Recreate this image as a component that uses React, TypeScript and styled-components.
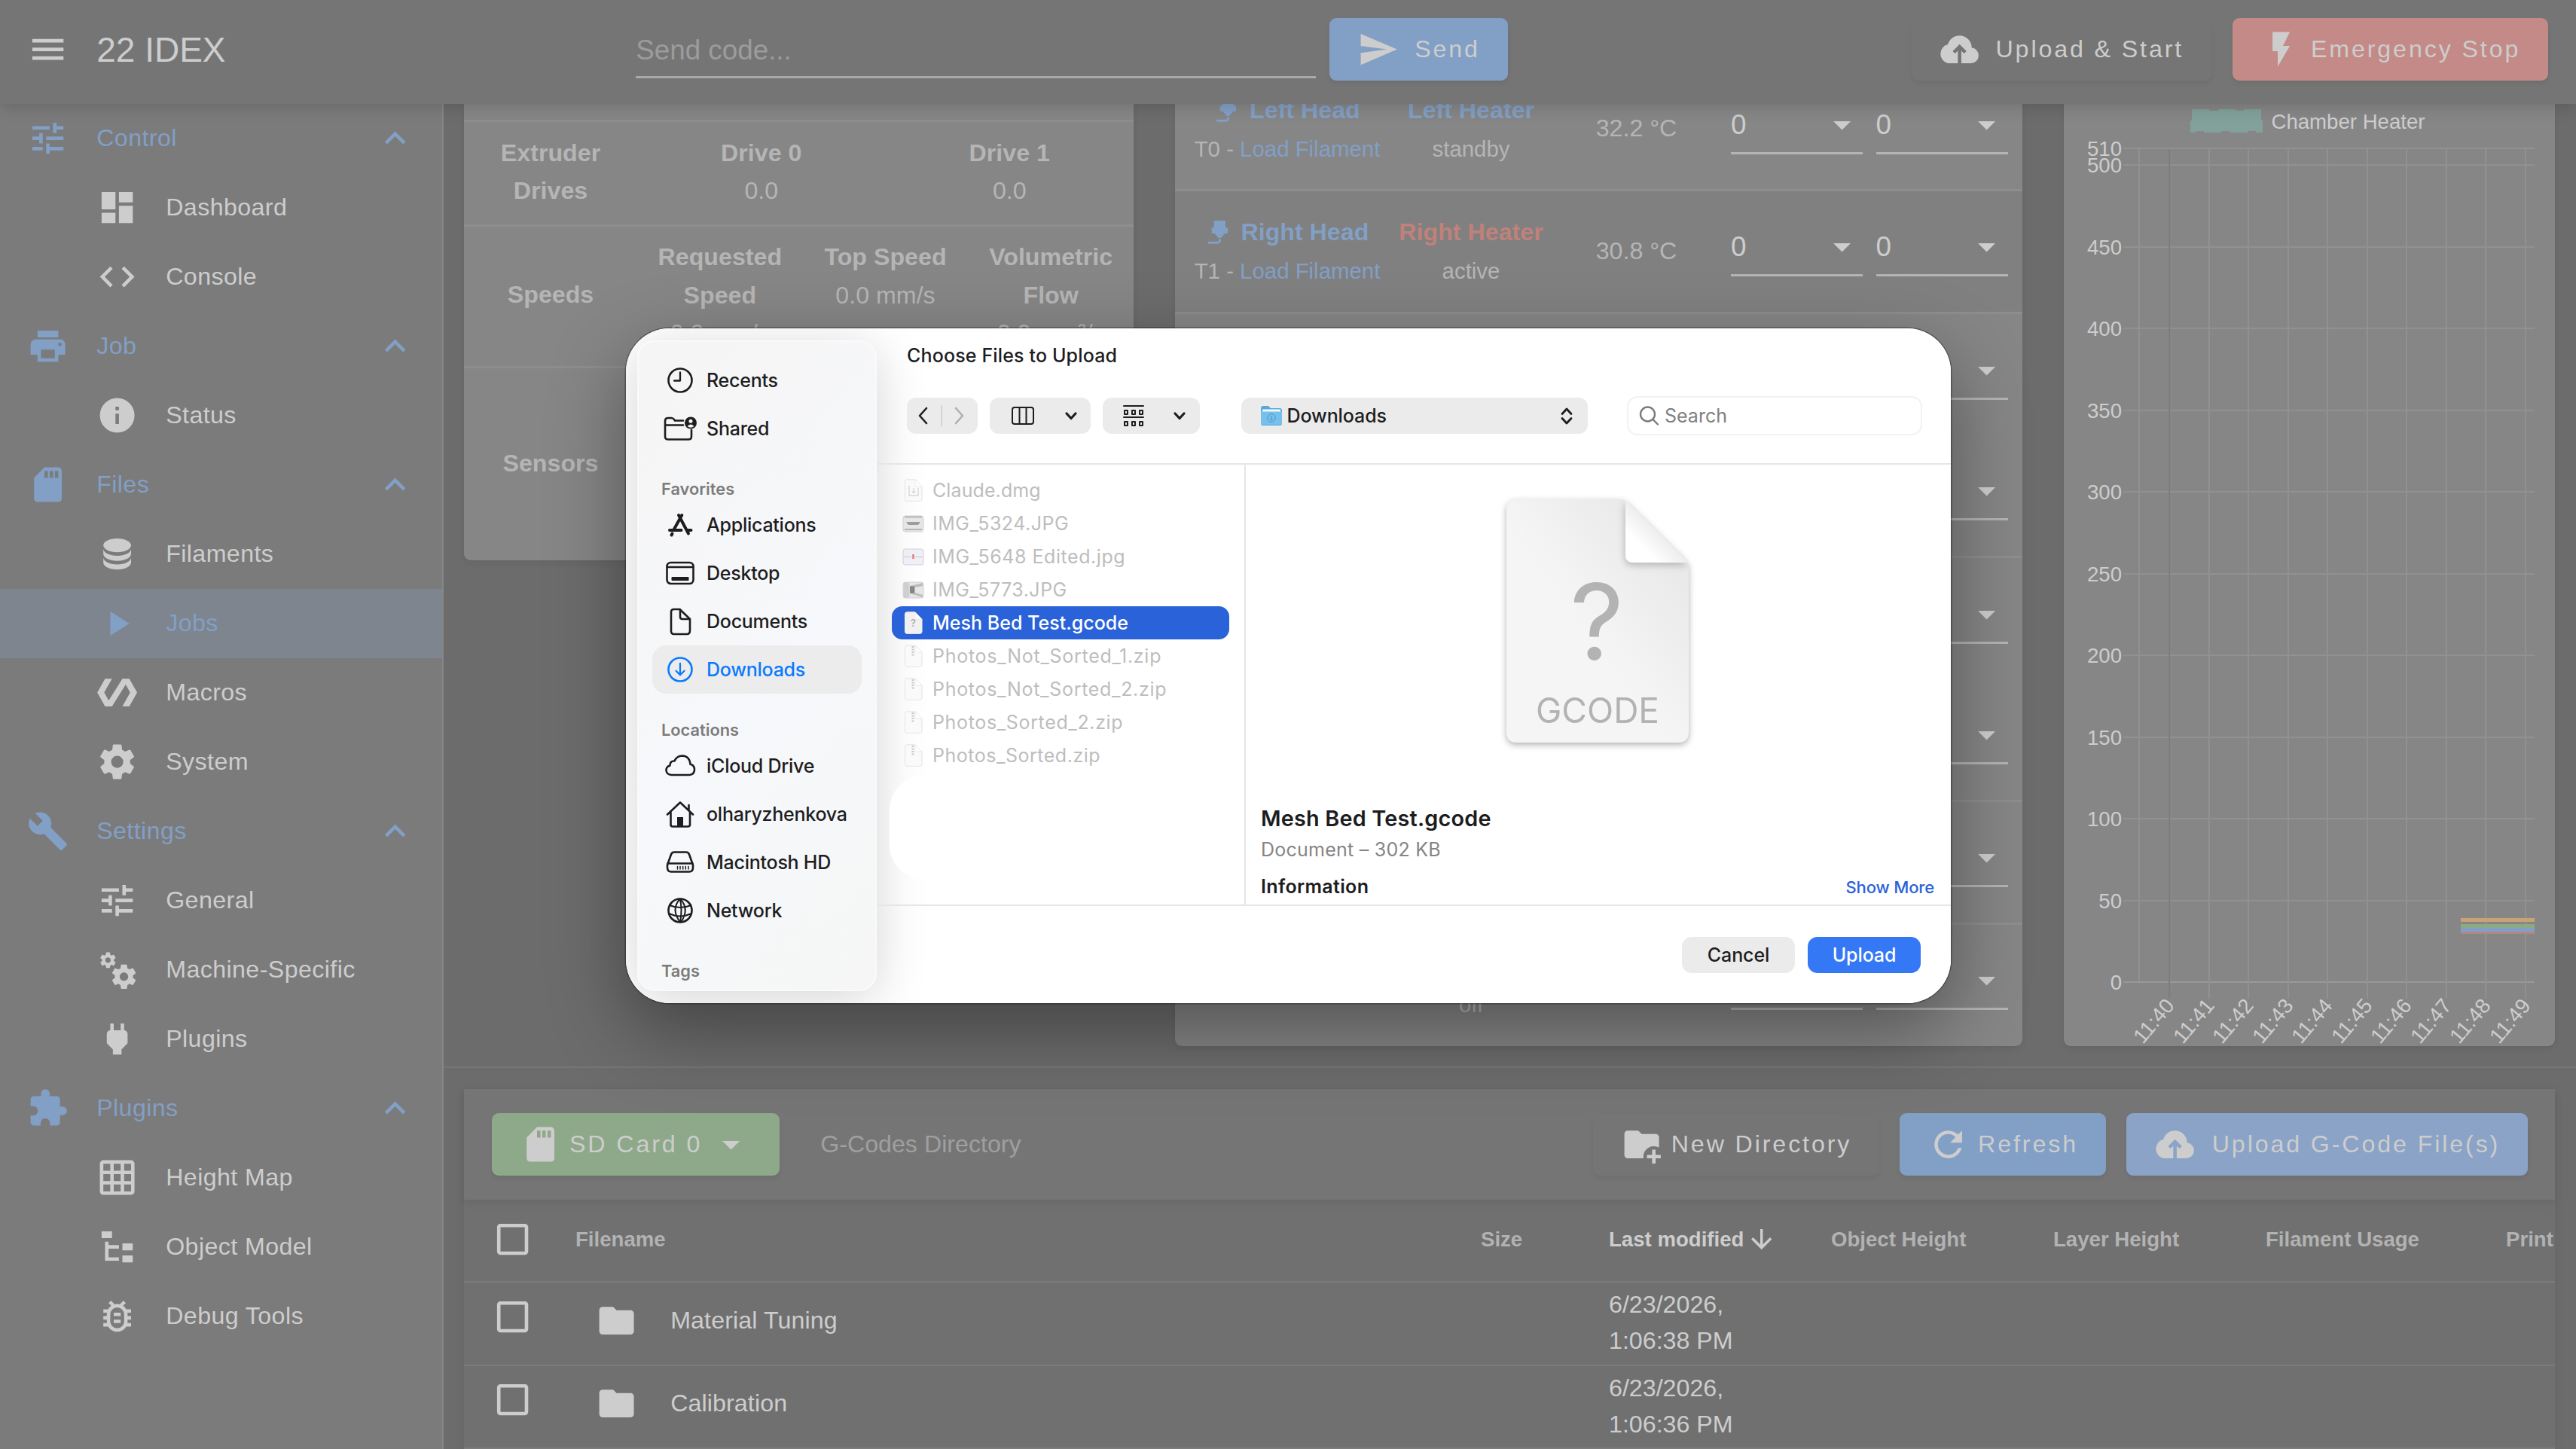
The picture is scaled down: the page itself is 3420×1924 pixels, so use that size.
import React from 'react';
import styled, { createGlobalStyle } from 'styled-components';

const GlobalStyle = createGlobalStyle`
  *, *::before, *::after { box-sizing: border-box; }
  body { margin: 0; background: #6c6c6c; }
`;

const UI = "'Liberation Sans', Helvetica, Arial, sans-serif";
const MAC = "Inter, 'Liberation Sans', sans-serif";
const BLUE = '#829fc5';
const LIGHT = '#cdcdcd';
const MUTED = '#b5b5b5';

const ICONS = {
  menu: 'M3,6H21V8H3V6M3,11H21V13H3V11M3,16H21V18H3V16Z',
  tune: 'M3,17V19H9V17H3M3,5V7H13V5H3M13,21V19H21V17H13V15H11V21H13M7,9V11H3V13H7V15H9V9H7M21,13V11H11V13H21M15,9H17V7H21V5H17V3H15V9Z',
  dashboard: 'M13,3V9H21V3M13,21H21V11H13M3,21H11V15H3M3,13H11V3H3V13Z',
  code: 'M14.6,16.6L19.2,12L14.6,7.4L16,6L22,12L16,18L14.6,16.6M9.4,16.6L4.8,12L9.4,7.4L8,6L2,12L8,18L9.4,16.6Z',
  printer: 'M18,3H6V7H18M19,12A1,1 0 0,1 18,11A1,1 0 0,1 19,10A1,1 0 0,1 20,11A1,1 0 0,1 19,12M16,19H8V14H16M19,8H5A3,3 0 0,0 2,11V17H6V21H18V17H22V11A3,3 0 0,0 19,8Z',
  info: 'M13,9H11V7H13M13,17H11V11H13M12,2A10,10 0 0,0 2,12A10,10 0 0,0 12,22A10,10 0 0,0 22,12A10,10 0 0,0 12,2Z',
  sd: 'M18,8H16V4H18M15,8H13V4H15M12,8H10V4H12M18,2H10L4,8V20A2,2 0 0,0 6,22H18A2,2 0 0,0 20,20V4A2,2 0 0,0 18,2Z',
  database: 'M12,3C7.58,3 4,4.79 4,7C4,9.21 7.58,11 12,11C16.42,11 20,9.21 20,7C20,4.79 16.42,3 12,3M4,9V12C4,14.21 7.58,16 12,16C16.42,16 20,14.21 20,12V9C20,11.21 16.42,13 12,13C7.58,13 4,11.21 4,9M4,14V17C4,19.21 7.58,21 12,21C16.42,21 20,19.21 20,17V14C20,16.21 16.42,18 12,18C7.58,18 4,16.21 4,14Z',
  play: 'M8,5.14V19.14L19,12.14L8,5.14Z',
  polymer: 'M19,4H15L7.1,16.63L4.5,12L9,4H5L0.5,12L5,20H9L16.89,7.37L19.5,12L15,20H19L23.5,12L19,4Z',
  cog: 'M12,15.5A3.5,3.5 0 0,1 8.5,12A3.5,3.5 0 0,1 12,8.5A3.5,3.5 0 0,1 15.5,12A3.5,3.5 0 0,1 12,15.5M19.43,12.97C19.47,12.65 19.5,12.33 19.5,12C19.5,11.67 19.47,11.34 19.43,11L21.54,9.37C21.73,9.22 21.78,8.95 21.66,8.73L19.66,5.27C19.54,5.05 19.27,4.96 19.05,5.05L16.56,6.05C16.04,5.66 15.5,5.32 14.87,5.07L14.5,2.42C14.46,2.18 14.25,2 14,2H10C9.75,2 9.54,2.18 9.5,2.42L9.13,5.07C8.5,5.32 7.96,5.66 7.44,6.05L4.95,5.05C4.73,4.96 4.46,5.05 4.34,5.27L2.34,8.73C2.21,8.95 2.27,9.22 2.46,9.37L4.57,11C4.53,11.34 4.5,11.67 4.5,12C4.5,12.33 4.53,12.65 4.57,12.97L2.46,14.63C2.27,14.78 2.21,15.05 2.34,15.27L4.34,18.73C4.46,18.95 4.73,19.03 4.95,18.95L7.44,17.94C7.96,18.34 8.5,18.68 9.13,18.93L9.5,21.58C9.54,21.82 9.75,22 10,22H14C14.25,22 14.46,21.82 14.5,21.58L14.87,18.93C15.5,18.67 16.04,18.34 16.56,17.94L19.05,18.95C19.27,19.03 19.54,18.95 19.66,18.73L21.66,15.27C21.78,15.05 21.73,14.78 21.54,14.63L19.43,12.97Z',
  wrench: 'M22.7,19L13.6,9.9C14.5,7.6 14,4.9 12.1,3C10.1,1 7.1,0.6 4.7,1.7L9,6L6,9L1.6,4.7C0.4,7.1 0.9,10.1 2.9,12.1C4.8,14 7.5,14.5 9.8,13.6L18.9,22.7C19.3,23.1 19.9,23.1 20.3,22.7L22.6,20.4C23.1,20 23.1,19.3 22.7,19Z',
  cogs: 'M15.9,18.45C17.25,18.45 18.35,17.35 18.35,16C18.35,14.65 17.25,13.55 15.9,13.55C14.54,13.55 13.45,14.65 13.45,16C13.45,17.35 14.54,18.45 15.9,18.45M21.1,16.68L22.58,17.84C22.71,17.95 22.75,18.13 22.66,18.29L21.26,20.71C21.17,20.86 21,20.92 20.83,20.86L19.09,20.16C18.73,20.44 18.33,20.67 17.91,20.85L17.64,22.7C17.62,22.87 17.47,23 17.3,23H14.5C14.32,23 14.18,22.87 14.15,22.7L13.89,20.85C13.46,20.67 13.07,20.44 12.71,20.16L10.96,20.86C10.81,20.92 10.62,20.86 10.54,20.71L9.14,18.29C9.05,18.13 9.09,17.95 9.22,17.84L10.7,16.68L10.65,16L10.7,15.31L9.22,14.16C9.09,14.05 9.05,13.86 9.14,13.71L10.54,11.29C10.62,11.13 10.81,11.07 10.96,11.13L12.71,11.84C13.07,11.56 13.46,11.32 13.89,11.15L14.15,9.29C14.18,9.13 14.32,9 14.5,9H17.3C17.47,9 17.62,9.13 17.64,9.29L17.91,11.15C18.33,11.32 18.73,11.56 19.09,11.84L20.83,11.13C21,11.07 21.17,11.13 21.26,11.29L22.66,13.71C22.75,13.86 22.71,14.05 22.58,14.16L21.1,15.31L21.15,16L21.1,16.68M6.69,8.07C7.56,8.07 8.26,7.37 8.26,6.5C8.26,5.63 7.56,4.92 6.69,4.92A1.58,1.58 0 0,0 5.11,6.5C5.11,7.37 5.82,8.07 6.69,8.07M10.03,6.94L11,7.68C11.07,7.75 11.09,7.87 11.03,7.97L10.13,9.53C10.08,9.63 9.96,9.67 9.86,9.63L8.74,9.18L8,9.62L7.81,10.81C7.79,10.92 7.7,11 7.59,11H5.79C5.67,11 5.58,10.92 5.56,10.81L5.4,9.62L4.64,9.18L3.52,9.63C3.41,9.67 3.3,9.63 3.24,9.53L2.34,7.97C2.28,7.87 2.31,7.75 2.39,7.68L3.34,6.94L3.31,6.5L3.34,6.06L2.39,5.32C2.31,5.25 2.28,5.13 2.34,5.03L3.24,3.47C3.3,3.37 3.41,3.33 3.52,3.37L4.63,3.82L5.4,3.38L5.56,2.19C5.58,2.08 5.67,2 5.79,2H7.59C7.7,2 7.79,2.08 7.81,2.19L8,3.38L8.74,3.82L9.86,3.37C9.96,3.33 10.08,3.37 10.13,3.47L11.03,5.03C11.09,5.13 11.07,5.25 11,5.32L10.03,6.06L10.06,6.5L10.03,6.94Z',
  plug: 'M16,7V3H14V7H10V3H8V7H8C7,7 6,8 6,9V14.5L9.5,18V21H14.5V18L18,14.5V9C18,8 17,7 16,7Z',
  puzzle: 'M20.5,11H19V7C19,5.89 18.1,5 17,5H13V3.5A2.5,2.5 0 0,0 10.5,1A2.5,2.5 0 0,0 8,3.5V5H4A2,2 0 0,0 2,7V10.8H3.5C5,10.8 6.2,12 6.2,13.5C6.2,15 5,16.2 3.5,16.2H2V20A2,2 0 0,0 4,22H7.8V20.5C7.8,19 9,17.8 10.5,17.8C12,17.8 13.2,19 13.2,20.5V22H17A2,2 0 0,0 19,20V16H20.5A2.5,2.5 0 0,0 23,13.5A2.5,2.5 0 0,0 20.5,11Z',
  grid: 'M10,4V8H14V4H10M16,4V8H20V4H16M16,10V14H20V10H16M16,16V20H20V16H16M14,20V16H10V20H14M8,20V16H4V20H8M8,14V10H4V14H8M8,8V4H4V8H8M10,14H14V10H10V14M4,2H20A2,2 0 0,1 22,4V20A2,2 0 0,1 20,22H4C2.92,22 2,21.1 2,20V4A2,2 0 0,1 4,2Z',
  tree: 'M3,3H9V7H3V3M15,10H21V14H15V10M15,17H21V21H15V17M13,13H7V18H13V20H7L5,20V9H7V11H13V13Z',
  bug: 'M20,8H17.19C16.74,7.2 16.12,6.5 15.37,6L17,4.41L15.59,3L13.42,5.17C12.96,5.06 12.49,5 12,5C11.51,5 11.04,5.06 10.59,5.17L8.41,3L7,4.41L8.62,6C7.88,6.5 7.26,7.21 6.81,8H4V10H6.09C6.03,10.33 6,10.66 6,11V12H4V14H6V15C6,15.34 6.04,15.67 6.09,16H4V18H6.81C8.47,20.87 12.14,21.84 15,20.18C15.91,19.66 16.67,18.9 17.19,18H20V16H17.91C17.96,15.67 18,15.34 18,15V14H20V12H18V11C18,10.66 17.96,10.33 17.91,10H20V8M16,15A4,4 0 0,1 12,19A4,4 0 0,1 8,15V11A4,4 0 0,1 12,7A4,4 0 0,1 16,11V15M14,10V12H10V10H14M10,14H14V16H10V14Z',
  chevronUp: 'M7.41,15.41L12,10.83L16.59,15.41L18,14L12,8L6,14L7.41,15.41Z',
  menuDown: 'M7,10L12,15L17,10H7Z',
  send: 'M2,21L23,12L2,3V10L17,12L2,14V21Z',
  cloud: 'M11 20H6.5Q4.22 20 2.61 18.43 1 16.85 1 14.58 1 12.63 2.17 11.1 3.35 9.57 5.25 9.15 5.88 6.85 7.75 5.43 9.63 4 12 4 14.93 4 16.96 6.04 19 8.07 19 11 20.73 11.2 21.86 12.5 23 13.78 23 15.5 23 17.38 21.69 18.69 20.38 20 18.5 20H13V12.85L14.6 14.4L16 13L12 9L8 13L9.4 14.4L11 12.85Z',
  flash: 'M7,2V13H10V22L17,10H13L17,2H7Z',
  folder: 'M10,4H4C2.89,4 2,4.89 2,6V18A2,2 0 0,0 4,20H20A2,2 0 0,0 22,18V8C22,6.89 21.1,6 20,6H12L10,4Z',
  folderPlus: 'M13 19C13 19.34 13.04 19.67 13.09 20H4C2.9 20 2 19.11 2 18V6C2 4.89 2.89 4 4 4H10L12 6H20C21.1 6 22 6.89 22 8V13.81C21.12 13.3 20.1 13 19 13C15.69 13 13 15.69 13 19M20 18V15H18V18H15V20H18V23H20V20H23V18H20Z',
  refresh: 'M17.65,6.35C16.2,4.9 14.21,4 12,4A8,8 0 0,0 4,12A8,8 0 0,0 12,20C15.73,20 18.84,17.45 19.73,14H17.65C16.83,16.33 14.61,18 12,18A6,6 0 0,1 6,12A6,6 0 0,1 12,6C13.66,6 15.14,6.69 16.22,7.78L13,11H20V4L17.65,6.35Z',
  checkbox: 'M19,3H5C3.89,3 3,3.89 3,5V19A2,2 0 0,0 5,21H19A2,2 0 0,0 21,19V5C21,3.89 20.1,3 19,3M19,5V19H5V5H19Z',
  arrowDown: 'M11,4H13V16L18.5,10.5L19.92,11.92L12,19.84L4.08,11.92L5.5,10.5L11,16V4Z',
  nozzle: 'M7,2H17V8H19V13H16.5L13,17H11L7.5,13H5V8H7V2M10,22H2V20H10A1,1 0 0,0 11,19V18H13V19A3,3 0 0,1 10,22Z',
};
type IconName = keyof typeof ICONS;

const Svg = styled.svg`
  display: block;
  flex: none;
  fill: currentColor;
`;
const Icon = ({ name, size = 55.2 }: { name: IconName; size?: number }) => (
  <Svg width={size} height={size} viewBox="0 0 24 24"><path d={ICONS[name]} /></Svg>
);

/* ---------- page shell ---------- */

const Page = styled.div`
  position: relative;
  display: flex;
  flex-direction: column;
  width: 3420px;
  height: 1924px;
  overflow: hidden;
  background: #6c6c6c;
  color: ${LIGHT};
  font-family: ${UI};
  font-size: 32.2px;
`;
const AppBar = styled.header`
  position: relative;
  z-index: 2;
  flex: none;
  display: flex;
  align-items: center;
  height: 138px;
  padding: 0 37px 7px 36px;
  background: #757575;
  box-shadow: 0 4px 20px rgba(0, 0, 0, 0.16);
`;
const Title = styled.h1`
  width: 716px;
  margin: 0 0 0 37px;
  font-size: 46px;
  font-weight: 400;
`;
const CodeInput = styled.div`
  display: flex;
  align-items: center;
  width: 903px;
  height: 76px;
  margin-right: 18px;
  padding-top: 6px;
  border-bottom: 3px solid #a9a9a9;
  color: #9c9c9c;
  font-size: 36.8px;
`;
const Button = styled.button<{ $bg?: string; $gap?: number }>`
  flex: none;
  display: flex;
  align-items: center;
  gap: ${(p) => p.$gap ?? 12}px;
  height: 83px;
  padding: 0 36.8px;
  border: 0;
  border-radius: 9px;
  background: ${(p) => p.$bg ?? 'transparent'};
  box-shadow: 0 4px 6px rgba(0, 0, 0, 0.06);
  color: ${LIGHT};
  font: 32.2px ${UI};
  letter-spacing: 2.88px;
  white-space: nowrap;
`;
const Spacer = styled.div`
  flex: 1;
`;
const Body = styled.div`
  flex: 1;
  display: flex;
  min-height: 0;
`;

/* ---------- navigation ---------- */

const Nav = styled.nav`
  flex: none;
  width: 589px;
  border-right: 2px solid #868686;
  background: #7b7b7b;
`;
const NavRow = styled.div<{ $child?: boolean; $active?: boolean }>`
  display: flex;
  align-items: center;
  gap: 37px;
  height: 92px;
  padding: 0 35px 0 ${(p) => (p.$child ? 128 : 36)}px;
  background: ${(p) => (p.$active ? '#7e858f' : 'transparent')};
  color: ${(p) => (p.$active || !p.$child ? BLUE : LIGHT)};
  letter-spacing: 0.4px;
`;
const NavLabel = styled.span`
  flex: 1;
  padding-bottom: 1px;
`;

const NAV: { icon: IconName; label: string; children: { icon: IconName; label: string; active?: boolean }[] }[] = [
  { icon: 'tune', label: 'Control', children: [{ icon: 'dashboard', label: 'Dashboard' }, { icon: 'code', label: 'Console' }] },
  { icon: 'printer', label: 'Job', children: [{ icon: 'info', label: 'Status' }] },
  {
    icon: 'sd', label: 'Files', children: [
      { icon: 'database', label: 'Filaments' },
      { icon: 'play', label: 'Jobs', active: true },
      { icon: 'polymer', label: 'Macros' },
      { icon: 'cog', label: 'System' },
    ],
  },
  {
    icon: 'wrench', label: 'Settings', children: [
      { icon: 'tune', label: 'General' },
      { icon: 'cogs', label: 'Machine-Specific' },
      { icon: 'plug', label: 'Plugins' },
    ],
  },
  {
    icon: 'puzzle', label: 'Plugins', children: [
      { icon: 'grid', label: 'Height Map' },
      { icon: 'tree', label: 'Object Model' },
      { icon: 'bug', label: 'Debug Tools' },
    ],
  },
];

const Navigation = () => (
  <Nav>
    {NAV.map((g, i) => (
      <React.Fragment key={i}>
        <NavRow><Icon name={g.icon} /><NavLabel>{g.label}</NavLabel><Icon name="chevronUp" /></NavRow>
        {g.children.map((c) => (
          <NavRow key={c.label} $child $active={c.active}><Icon name={c.icon} /><NavLabel>{c.label}</NavLabel></NavRow>
        ))}
      </React.Fragment>
    ))}
  </Nav>
);

/* ---------- dashboard cards ---------- */

const Main = styled.main`
  flex: 1;
  min-width: 0;
  display: flex;
  flex-direction: column;
`;
const Panels = styled.div`
  flex: none;
  display: flex;
  align-items: flex-start;
  gap: 55px;
  height: 1280px;
  padding-left: 27px;
  border-bottom: 2px solid #767676;
`;
const Card = styled.section<{ $w: number; $h: number }>`
  flex: none;
  display: flex;
  flex-direction: column;
  width: ${(p) => p.$w}px;
  height: ${(p) => p.$h}px;
  border-radius: 0 0 9px 9px;
  background: #868686;
  box-shadow: 0 3px 8px rgba(0, 0, 0, 0.07);
`;
const StatusRow = styled.div<{ $h: number; $last?: boolean }>`
  flex: none;
  display: flex;
  align-items: center;
  height: ${(p) => p.$h}px;
  padding-bottom: ${(p) => (p.$h > 24 && !p.$last ? 4 : 0)}px;
  border-bottom: ${(p) => (p.$last ? 0 : 3)}px solid #8e8e8e;
  color: ${MUTED};
  line-height: 50.5px;
  text-align: center;
`;
const StatusLabel = styled.strong`
  width: 230px;
  padding: 0 40px;
`;
const StatusCell = styled.div`
  flex: 1;
  align-self: center;
`;
const TopCell = styled(StatusCell)`
  height: 151px;
`;

const StatusCard = () => (
  <Card $w={889} $h={606}>
    <StatusRow $h={24} />
    <StatusRow $h={139}>
      <StatusLabel>Extruder Drives</StatusLabel>
      <StatusCell><strong>Drive 0</strong><br />0.0</StatusCell>
      <StatusCell><strong>Drive 1</strong><br />0.0</StatusCell>
    </StatusRow>
    <StatusRow $h={188}>
      <StatusLabel>Speeds</StatusLabel>
      <TopCell><strong>Requested Speed</strong><br />0.0 mm/s</TopCell>
      <TopCell><strong>Top Speed</strong><br />0.0 mm/s</TopCell>
      <TopCell><strong>Volumetric Flow</strong><br />0.0 mm³/s</TopCell>
    </StatusRow>
    <StatusRow $h={252} $last><StatusLabel>Sensors</StatusLabel></StatusRow>
  </Card>
);

const ToolList = styled.div`
  display: flex;
  flex-direction: column;
  margin-top: -46px;
`;
const ToolRow = styled.div<{ $h: number; $line?: boolean; $selected?: boolean }>`
  flex: none;
  display: grid;
  grid-template-columns: 298px 190px 249px 175px 175px;
  align-items: center;
  height: ${(p) => p.$h}px;
  border-bottom: ${(p) => (p.$line ? 3 : 0)}px solid #8e8e8e;
  background: ${(p) => (p.$selected ? '#808080' : 'transparent')};
  color: ${MUTED};
  text-align: center;
`;
const ToolCell = styled.div<{ $up?: boolean }>`
  display: flex;
  flex-direction: column;
  align-items: center;
  padding-bottom: ${(p) => (p.$up ? 2 : 0)}px;
  line-height: 51px;
  white-space: nowrap;
`;
const ToolName = styled.strong<{ $color: string }>`
  display: flex;
  align-items: center;
  gap: 10px;
  height: 51px;
  color: ${(p) => p.$color};
`;
const Small = styled.span`
  height: 51px;
  font-size: 29.4px;
`;
const Link = styled.span`
  color: ${BLUE};
`;
const Select = styled.div<{ $second?: boolean }>`
  display: flex;
  align-items: center;
  justify-content: space-between;
  height: 66px;
  padding-bottom: 9px;
  margin-left: ${(p) => (p.$second ? 18.5 : 1)}px;
  margin-right: ${(p) => (p.$second ? -18.5 : -1)}px;
  border-bottom: 3px solid #b4b4b4;
  color: ${LIGHT};
  font-size: 36.8px;
`;

type Tool = { h: number; line?: boolean; selected?: boolean; head?: string; id?: string; heater?: string; color?: string; state?: string; temp?: string };
const TOOLS: Tool[] = [
  { h: 162, line: true, head: 'Left Head', id: 'T0', heater: 'Left Heater', color: BLUE, state: 'standby', temp: '32.2 °C' },
  { h: 163, line: true, selected: true, head: 'Right Head', id: 'T1', heater: 'Right Heater', color: '#c0817b', state: 'active', temp: '30.8 °C' },
  { h: 161 },
  { h: 163, line: true },
  { h: 161 },
  { h: 163, line: true },
  { h: 163, line: true },
  { h: 160, state: 'off' },
];

const SelectArrow = () => <Icon name="menuDown" />;

const ToolsCard = () => (
  <Card $w={1124.5} $h={1251}>
    <ToolList>
      {TOOLS.map((t, i) => (
        <ToolRow key={i} $h={t.h} $line={t.line} $selected={t.selected}>
          <ToolCell>
            {t.head && <ToolName $color={BLUE}><Icon name="nozzle" size={36.8} />{t.head}</ToolName>}
            {t.id && <Small>{t.id} - <Link>Load Filament</Link></Small>}
          </ToolCell>
          <ToolCell>
            {t.state && <ToolName $color={t.color ?? MUTED}>{t.heater}</ToolName>}
            {t.state && <Small>{t.state}</Small>}
          </ToolCell>
          <ToolCell $up>{t.temp}</ToolCell>
          <Select>0<SelectArrow /></Select>
          <Select $second>0<SelectArrow /></Select>
        </ToolRow>
      ))}
    </ToolList>
  </Card>
);

const ChartSvg = styled.svg`
  display: block;
  font-family: ${UI};
  font-size: 27.6px;
  fill: ${LIGHT};
`;
const TICKS_X = [2880, 2933, 2985, 3038, 3090, 3143, 3195, 3248, 3300, 3353];

const ChartCard = () => (
  <Card $w={652} $h={1251}>
    <ChartSvg width="652" height="1251" viewBox="2740 138 652 1251">
      <path d="M2910,145H2933V147H2945V145H2968V147H2979V145H3002V159H3004V176H2995V174H2984V176H2961V174H2949V176H2926V174H2915V176H2908V160H2910Z" fill="#82a19b" />
      <text x="3015.5" y="171">Chamber Heater</text>
      {[510, 500, 450, 400, 350, 300, 250, 200, 150, 100, 50, 0].map((v) => {
        const y = Math.round(1304 - v * 2.17);
        return (
          <g key={v}>
            <rect x="2819" y={y - 1} width="546" height="2" fill={v ? '#919191' : '#999999'} />
            <text x="2817" y={y + 10} textAnchor="end">{v}</text>
          </g>
        );
      })}
      <rect x="2839" y="198" width="2" height="1106" fill="#919191" />
      {TICKS_X.map((x, i) => (
        <g key={x}>
          <rect x={x - 1} y="198" width="2" height="1128" fill={i ? '#919191' : '#7d7d7d'} />
          <text textAnchor="end" transform={`translate(${x + 8} 1336) rotate(-50)`} x="0" y="0">{`11:${40 + i}`}</text>
        </g>
      ))}
      <rect x="3267" y="1219" width="98" height="5" fill="#c9a374" />
      <rect x="3267" y="1227" width="98" height="5" fill="#8ba983" />
      <rect x="3267" y="1232" width="98" height="6" fill={BLUE} />
      <rect x="3267" y="1237.5" width="98" height="2.5" fill="#b98481" />
    </ChartSvg>
  </Card>
);

/* ---------- file table ---------- */

const Files = styled.section`
  flex: none;
  width: 2776px;
  margin: 28px 0 0 27px;
  background: #707070;
  box-shadow: 0 4px 14px rgba(0, 0, 0, 0.06);
`;
const FilesBar = styled.div`
  display: flex;
  align-items: center;
  height: 147px;
  padding: 0 36px 0 37px;
  background: #757575;
  box-shadow: 0 4px 10px rgba(0, 0, 0, 0.08);
`;
const Directory = styled.span`
  margin-left: 54px;
  color: #9f9f9f;
`;
const BarActions = styled.div`
  display: flex;
  gap: 27px;
`;
const FileRow = styled.div<{ $head?: boolean }>`
  display: grid;
  grid-template-columns: 148px 1202px 170px 295px 295px 282px 319px 65px;
  align-items: center;
  height: ${(p) => (p.$head ? 110 : 110.5)}px;
  padding-bottom: ${(p) => (p.$head ? 2 : 1)}px;
  border-bottom: 2px solid #7c7c7c;
  overflow: hidden;
  white-space: nowrap;
  ${(p) => p.$head && 'color: #b2b2b2; font-size: 27.6px; font-weight: 700;'}
`;
const Check = styled.div<{ $up: number }>`
  padding: 0 0 ${(p) => p.$up}px 37px;
  color: ${LIGHT};
`;
const FileName = styled.div`
  display: flex;
  align-items: center;
  gap: 44px;
  padding: 0 0 7px 27px;
  letter-spacing: 0.1px;
`;
const Modified = styled.div`
  grid-column: 4;
  padding-bottom: 1px;
  line-height: 48px;
  white-space: pre-line;
`;
const SortHead = styled.div`
  display: flex;
  align-items: center;
  gap: 3px;
  color: ${LIGHT};
`;

const FilesCard = () => (
  <Files>
    <FilesBar>
      <Button $bg="#8ea989" $gap={11}><Icon name="sd" />SD Card 0<Icon name="menuDown" /></Button>
      <Directory>G-Codes Directory</Directory>
      <Spacer />
      <BarActions>
        <Button><Icon name="folderPlus" />New Directory</Button>
        <Button $bg={BLUE}><Icon name="refresh" />Refresh</Button>
        <Button $bg="#8aa3c6" $gap={22}><Icon name="cloud" />Upload G-Code File(s)</Button>
      </BarActions>
    </FilesBar>
    <FileRow $head>
      <Check $up={0}><Icon name="checkbox" /></Check>
      <div>Filename</div>
      <div>Size</div>
      <SortHead>Last modified <Icon name="arrowDown" size={41.4} /></SortHead>
      <div>Object Height</div>
      <div>Layer Height</div>
      <div>Filament Usage</div>
      <div>Print</div>
    </FileRow>
    {[['Material Tuning', '1:06:38 PM'], ['Calibration', '1:06:36 PM']].map(([name, time]) => (
      <FileRow key={name}>
        <Check $up={17}><Icon name="checkbox" /></Check>
        <FileName><Icon name="folder" />{name}</FileName>
        <Modified>{`6/23/2026,\n${time}`}</Modified>
      </FileRow>
    ))}
  </Files>
);

/* ---------- file chooser window ---------- */

const Dialog = styled.div`
  position: absolute;
  z-index: 5;
  left: 830.5px;
  top: 436px;
  display: flex;
  width: 1759.5px;
  height: 896px;
  border-radius: 58px;
  overflow: hidden;
  background: #fff;
  color: #1d1d1f;
  font: 500 25px ${MAC};
`;
const DialogShadow = styled(Dialog)`
  z-index: 4;
  box-shadow: 0 0 0 1.5px rgba(0, 0, 0, 0.3), 0 36px 100px rgba(0, 0, 0, 0.38);
`;
const Side = styled.aside`
  flex: none;
  width: 318px;
  height: 864px;
  margin: 16px 0 0 15.5px;
  padding: 18.5px 18px 0;
  border-radius: 24px;
  border: 2px solid #fafafa;
  background: linear-gradient(135deg, #f5f5f5, #f7f8fb 55%, #f5f6f5);
  box-shadow: 0 10px 66px rgba(0, 0, 0, 0.17);
`;
const SideItem = styled.div<{ $active?: boolean }>`
  display: flex;
  align-items: center;
  height: 64px;
  padding-left: 17px;
  gap: 15px;
  border-radius: 18px;
  background: ${(p) => (p.$active ? '#ececed' : 'transparent')};
  color: ${(p) => (p.$active ? '#0a7aff' : '#1d1d1f')};
  letter-spacing: -0.25px;
  white-space: nowrap;
`;
const SideHead = styled.div`
  display: flex;
  align-items: flex-end;
  height: 64px;
  padding: 0 0 3px 12px;
  color: #7c7c7c;
  font-size: 21.8px;
  font-weight: 600;
`;
const LineSvg = styled.svg`
  display: block;
  flex: none;
  overflow: visible;
  fill: none;
  stroke: currentColor;
  stroke-width: 2.6;
  stroke-linecap: round;
  stroke-linejoin: round;
`;
const GLYPHS: Record<string, React.ReactNode> = {
  Recents: <><circle cx="20" cy="20" r="15.5" /><path d="M20 9.5V20.5H12" strokeWidth="2.3" /></>,
  Shared: (
    <>
      <path d="M35 22V30.5Q35 34.5 31 34.5H4Q0 34.5 0 30.5V10Q0 6 4 6H8.5Q10.5 6 12 8L13 9.5H24M0 15.5H24" />
      <circle cx="34" cy="12.5" r="8" fill="currentColor" stroke="none" />
      <circle cx="34" cy="10.2" r="2.5" fill="#f6f6f6" stroke="none" />
      <path d="M29.5 17Q34 12 38.5 17Q34 20.5 29.5 17Z" fill="#f6f6f6" stroke="none" />
    </>
  ),
  Applications: (
    <g strokeWidth="4">
      <path d="M18 7L31 31.5M22.3 7L12 25.5M6 27H21.5M28.5 27H34.5M9.5 31.5L8.5 33.5" />
    </g>
  ),
  Desktop: <><rect x="2.5" y="6" width="35" height="28" rx="5" /><path d="M3 12H37" /><rect x="8.5" y="25" width="23" height="5" rx="1" fill="currentColor" stroke="none" /></>,
  Documents: <><path d="M11 4H19.5L33 17V32Q33 37 29 37H12Q8 37 8 33V7.5Q8 4 11.5 4Z" /><path d="M20 4.5V14Q20 17 23 17H32.5" /></>,
  Downloads: <><circle cx="20" cy="20" r="15.5" /><path d="M20 12V27M14.5 21.8L20 27.2L25.5 21.8" strokeWidth="2.3" /></>,
  'iCloud Drive': <path d="M8.5 32H32Q39 31.5 39 25Q39 19 33.5 17.8Q32.5 7 23 6.5Q15.5 6.5 12.5 13.5Q6.5 13 6.5 19.5Q1.300 21 1.5 26Q2 31.5 8.5 32Z" />,
  olharyzhenkova: <><path d="M3 20.5L20 4.5L37 20.5M7.5 18V34Q7.5 36.5 10 36.5H30Q33 36.5 33 34V18M31.5 14V8" /><rect x="16" y="24" width="8" height="12" fill="currentColor" stroke="none" /></>,
  'Macintosh HD': <><path d="M8 9.5Q9 6.5 12 6.5H28Q31 6.5 32 9.5L37 23.5V27Q37 32.5 32 32.5H8Q3 32.5 3 27V23.5Z" /><path d="M3.5 21.5H36.5" strokeWidth="2.3" /><path d="M16.5 25.5V29M20 25.5V29M23.7 25.5V29M27.3 25.5V29M31 25.5V29" strokeWidth="1.5" /></>,
  Network: <><circle cx="20" cy="20" r="15.5" /><path d="M20 4.5Q7 18 20 35.5M20 4.5Q33 18 21 35.5M20 4.5Q23 20 20 35.5M6 13Q20 19 34.5 13M5 24Q20 31 35 24" strokeWidth="2" /></>,
};
const SideGlyph = ({ name }: { name: string }) => (
  <LineSvg width="40" height="40" viewBox="0 0 40 40">{GLYPHS[name]}</LineSvg>
);
const SIDE: [string, string[]][] = [
  ['', ['Recents', 'Shared']],
  ['Favorites', ['Applications', 'Desktop', 'Documents', 'Downloads']],
  ['Locations', ['iCloud Drive', 'olharyzhenkova', 'Macintosh HD', 'Network']],
  ['Tags', []],
];

const Pane = styled.div`
  position: relative;
  z-index: 1;
  flex: 1;
  display: flex;
  flex-direction: column;
  min-width: 0;
`;
const PaneTop = styled.div`
  height: 181px;
  padding: 21px 38px 0 40px;
  border-bottom: 2px solid #e6e6e6;
`;
const PaneTitle = styled.div`
  height: 31px;
  line-height: 31px;
  letter-spacing: 0.15px;
`;
const ToolStrip = styled.div`
  display: flex;
  align-items: center;
  height: 52px;
  margin-top: 38px;
`;
const Segment = styled.div<{ $w: number; $mr: number }>`
  flex: none;
  display: flex;
  align-items: center;
  width: ${(p) => p.$w}px;
  height: 48px;
  margin-right: ${(p) => p.$mr}px;
  border-radius: 12px;
  background: #ebebeb;
`;
const PathLabel = styled.span`
  flex: 1;
  padding-left: 7px;
  letter-spacing: -0.1px;
`;
const SearchBox = styled.div`
  flex: 1;
  display: flex;
  align-items: center;
  gap: 8px;
  height: 52px;
  padding-left: 14px;
  border: 2px solid #f2f2f2;
  border-radius: 14px;
  color: #808080;
  font-weight: 400;
`;
const Columns = styled.div`
  display: flex;
  height: 586px;
  border-bottom: 2px solid #e6e6e6;
`;
const FileColumn = styled.div`
  width: 490px;
  padding: 12px 20px 0 20px;
  border-right: 2px solid #e6e6e6;
`;
const FileItem = styled.div<{ $selected?: boolean; $track: number }>`
  display: flex;
  align-items: center;
  gap: 11px;
  height: 44px;
  padding-left: 14px;
  border-radius: 14px;
  background: ${(p) => (p.$selected ? '#2962d9' : 'transparent')};
  color: ${(p) => (p.$selected ? '#fff' : '#bdbdbd')};
  font-weight: ${(p) => (p.$selected ? 500 : 400)};
  letter-spacing: ${(p) => p.$track}px;
  white-space: nowrap;
`;
const EmptyArea = styled.div`
  height: 137px;
  margin: 5px 0 0 -3px;
  border-radius: 45px 0 0 45px;
  background: #fff;
`;
const Preview = styled.div`
  flex: 1;
  display: flex;
  flex-direction: column;
  padding: 46px 22px 0 20px;
`;
const PreviewArt = styled.svg`
  display: block;
  align-self: center;
  overflow: visible;
  filter: drop-shadow(0 3px 4px rgba(0, 0, 0, 0.3));
`;
const PreviewTitle = styled.div`
  margin-top: 84px;
  height: 34px;
  line-height: 34px;
  font-size: 28.8px;
  font-weight: 600;
  letter-spacing: 0.2px;
`;
const PreviewKind = styled.div`
  margin-top: 9px;
  line-height: 30px;
  color: #858585;
  font-weight: 400;
  letter-spacing: 0.25px;
`;
const PreviewInfo = styled.div`
  display: flex;
  align-items: center;
  justify-content: space-between;
  margin-top: 16px;
  line-height: 32px;
  font-weight: 600;
  letter-spacing: 0.35px;
`;
const ShowMore = styled.span`
  padding-top: 3px;
  color: #2962d9;
  font-size: 22px;
  font-weight: 500;
  letter-spacing: -0.15px;
`;
const Footer = styled.div`
  display: flex;
  justify-content: flex-end;
  gap: 17px;
  padding: 41px 40px 0;
`;
const MacButton = styled.button<{ $primary?: boolean }>`
  width: 150px;
  height: 48px;
  padding: 0;
  border: 0;
  border-radius: 13px;
  background: ${(p) => (p.$primary ? '#3478f6' : '#ebebeb')};
  color: ${(p) => (p.$primary ? '#fff' : '#1d1d1f')};
  font: 500 25px ${MAC};
  letter-spacing: -0.1px;
`;

const Stroke = styled(LineSvg)<{ $color: string; $sw: number }>`
  stroke: ${(p) => p.$color};
  stroke-width: ${(p) => p.$sw};
`;
const Chevron = ({ color = '#1d1d1f', d, w, h = 22, sw = 3.2 }: { color?: string; d: string; w: number; h?: number; sw?: number }) => (
  <Stroke width={w} height={h} viewBox={`0 0 ${w} ${h}`} $color={color} $sw={sw}><path d={d} /></Stroke>
);

type Kind = 'dmg' | 'photo1' | 'photo2' | 'photo3' | 'gcode' | 'zip';
const FileThumb = styled.svg`
  display: block;
  flex: none;
`;
const Thumb = ({ kind }: { kind: Kind }) => {
  if (kind.startsWith('photo')) {
    return (
      <FileThumb width="29" height="30" viewBox="0 0 29 30">
        <rect x="1" y="5" width="27" height="21" rx="3" fill={kind === 'photo2' ? '#edf1f7' : '#e6e6e6'} stroke="#d0d0d0" />
        {kind === 'photo1' && <path d="M3 6.5H26M3 23H26" stroke="#b5b5b5" strokeWidth="2" />}
        {kind === 'photo1' && <path d="M5 13H24L21 17H8Z" fill="#9c9c9c" />}
        {kind === 'photo2' && <path d="M14.5 12V18" stroke="#e57a7a" strokeWidth="2.5" />}
        {kind === 'photo2' && <path d="M2 15.5H12M17 15.5H27" stroke="#e9b8bc" strokeWidth="1.2" />}
        {kind === 'photo3' && <><rect x="1.5" y="5.5" width="8" height="20" rx="2" fill="#cfcfcf" /><path d="M10 10L27 6V10L17 12V19L27 22V25L10 20Z" fill="#bdbdbd" /><rect x="10" y="10.5" width="6" height="9" fill="#858585" /></>}
      </FileThumb>
    );
  }
  return (
    <FileThumb width="29" height="30" viewBox="0 0 29 30">
      <path d="M6 .8H17L26 10V26.5Q26 29.3 23.5 29.3H6Q3.5 29.3 3.5 26.5V3.5Q3.5 .8 6 .8Z" fill={kind === 'gcode' ? '#f1f1f1' : '#fafafa'} stroke={kind === 'gcode' ? '#f4f4f4' : '#e4e4e4'} />
      <path d="M17 1V8Q17 10 19 10H26Z" fill="#fff" stroke="#e4e4e4" strokeWidth=".8" />
      {kind === 'zip' && <path d="M14 2V15" stroke="#c9c9c9" strokeWidth="3" strokeDasharray="2 1.5" />}
      {kind === 'dmg' && <path d="M9 9V22H21V12M15 12V18M13 16.5L15 18.5L17 16.5" fill="none" stroke="#d6d6d6" strokeWidth="1.3" />}
      {kind === 'gcode' && <text x="14.5" y="20" textAnchor="middle" fontSize="13" fill="#a5a5a5">?</text>}
    </FileThumb>
  );
};

const FILES: [string, Kind, number][] = [
  ['Claude.dmg', 'dmg', 0.1],
  ['IMG_5324.JPG', 'photo1', 0.5],
  ['IMG_5648 Edited.jpg', 'photo2', 0.55],
  ['IMG_5773.JPG', 'photo3', 0.5],
  ['Mesh Bed Test.gcode', 'gcode', 0.02],
  ['Photos_Not_Sorted_1.zip', 'zip', 0.73],
  ['Photos_Not_Sorted_2.zip', 'zip', 0.7],
  ['Photos_Sorted_2.zip', 'zip', 0.65],
  ['Photos_Sorted.zip', 'zip', 0.52],
];

const Divider = styled.i`
  width: 2px;
  height: 28px;
  margin: 0 17px 0 18px;
  background: #d4d4d4;
`;
const Pad = styled.i<{ $w: number }>`
  flex: none;
  width: ${(p) => p.$w}px;
`;

const FileChooser = () => (
  <Dialog role="dialog">
    <Side>
      {SIDE.map(([title, items]) => (
        <React.Fragment key={title}>
          {title && <SideHead>{title}</SideHead>}
          {items.map((n) => <SideItem key={n} $active={n === 'Downloads'}><SideGlyph name={n} />{n}</SideItem>)}
        </React.Fragment>
      ))}
    </Side>
    <Pane>
      <PaneTop>
        <PaneTitle>Choose Files to Upload</PaneTitle>
        <ToolStrip>
          <Segment $w={94} $mr={16}>
            <Pad $w={15} />
            <Chevron w={12} d="M11 1L2 11L11 21" sw={2.6} />
            <Divider />
            <Chevron w={12} d="M1 1L10 11L1 21" color="#b0b0b0" sw={2.6} />
          </Segment>
          <Segment $w={133.5} $mr={16.5}>
            <Pad $w={29} />
            <Chevron w={30} h={24} d="M4 1H26Q29 1 29 4V20Q29 23 26 23H4Q1 23 1 20V4Q1 1 4 1ZM10.5 1V23M19.5 1V23" sw={2} />
            <Pad $w={42} />
            <Chevron w={14} h={8} d="M1 1L7 7.5L13 1" />
          </Segment>
          <Segment $w={129} $mr={54.5}>
            <Pad $w={27} />
            <Chevron w={28} h={28} d="M1 1H27M1 16H27M2 7H6V12H2ZM12 7H16V12H12ZM22 7H26V12H22ZM2 22H6V27H2ZM12 22H16V27H12ZM22 22H26V27H22Z" sw={2} />
            <Pad $w={40} />
            <Chevron w={14} h={8} d="M1 1L7 7.5L13 1" />
          </Segment>
          <Segment $w={460} $mr={52.5}>
            <Pad $w={26} />
            <FileThumb width="28" height="26" viewBox="0 0 28 26">
              <path d="M0 3Q0 0 3 0H10L13 3H25Q28 3 28 6V23Q28 26 25 26H3Q0 26 0 23Z" fill="#57a9dc" />
              <rect x="2" y="4.5" width="24" height="5" rx="1" fill="#f2fafe" />
              <path d="M0 7.5H28V22.5Q28 25 25 25H3Q0 25 0 22.5Z" fill="#77c0ec" />
              <circle cx="14" cy="16" r="5.3" fill="none" stroke="#4c9bcb" />
              <path d="M14 13V19M12 17L14 19L16 17" fill="none" stroke="#4c9bcb" />
            </FileThumb>
            <PathLabel>Downloads</PathLabel>
            <Chevron w={14} h={21} d="M1 7.5L7 1L13 7.5M1 13.5L7 20L13 13.5" sw={2.8} />
            <Pad $w={21} />
          </Segment>
          <SearchBox>
            <Chevron w={26} h={26} d="M2 11A9.500 9.500 0 1 0 21 11A9.500 9.500 0 1 0 2 11M18.5 18L25 24.5" color="#7a7a7a" sw={2.4} />
            Search
          </SearchBox>
        </ToolStrip>
      </PaneTop>
      <Columns>
        <FileColumn>
          {FILES.map(([n, k, track]) => (
            <FileItem key={n} $selected={k === 'gcode'} $track={track}><Thumb kind={k} />{n}</FileItem>
          ))}
          <EmptyArea />
        </FileColumn>
        <Preview>
          <PreviewArt width="242" height="323" viewBox="0 0 242 323">
            <defs>
              <linearGradient id="sheet" x1="0" y1="1" x2="1" y2="0">
                <stop offset=".45" stopColor="#f5f5f5" />
                <stop offset="1" stopColor="#e4e4e4" />
              </linearGradient>
              <linearGradient id="fold" x1="0" y1="1" x2="1" y2="0">
                <stop offset=".25" stopColor="#ffffff" />
                <stop offset=".6" stopColor="#e6e6e6" />
              </linearGradient>
              <filter id="foldShade" x="-40%" y="-40%" width="180%" height="180%">
                <feDropShadow dx="-1" dy="4" stdDeviation="5" floodOpacity=".22" />
              </filter>
              <clipPath id="sheetClip">
                <path d="M14 0H150Q157 0 162 5L236 78Q242 84 242 92V309Q242 323 228 323H14Q0 323 0 309V14Q0 0 14 0Z" />
              </clipPath>
            </defs>
            <g clipPath="url(#sheetClip)">
              <rect width="242" height="323" fill="url(#sheet)" />
              <path d="M158 0V73Q158 84 169 84H242Z" fill="url(#fold)" filter="url(#foldShade)" />
            </g>
            <text x="120" y="213" textAnchor="middle" fontFamily={MAC} fontSize="140" fontWeight="400" fill="#b3b3b3">?</text>
            <text x="121" y="297" textAnchor="middle" fontFamily={MAC} fontSize="47" fontWeight="400" textLength="164" lengthAdjust="spacingAndGlyphs" fill="#b3b3b3">GCODE</text>
          </PreviewArt>
          <PreviewTitle>Mesh Bed Test.gcode</PreviewTitle>
          <PreviewKind>Document – 302 KB</PreviewKind>
          <PreviewInfo>Information<ShowMore>Show More</ShowMore></PreviewInfo>
        </Preview>
      </Columns>
      <Footer>
        <MacButton>Cancel</MacButton>
        <MacButton $primary>Upload</MacButton>
      </Footer>
    </Pane>
  </Dialog>
);

export default function App() {
  return (
    <>
      <GlobalStyle />
      <Page>
        <AppBar>
          <Icon name="menu" />
          <Title>22 IDEX</Title>
          <CodeInput>Send code...</CodeInput>
          <Button $bg={BLUE} $gap={21}><Icon name="send" />Send</Button>
          <Spacer />
          <Button $gap={20}><Icon name="cloud" />Upload &amp; Start</Button>
          <Pad $w={28} />
          <Button $bg="#c48a87"><Icon name="flash" />Emergency Stop</Button>
        </AppBar>
        <Body>
          <Navigation />
          <Main>
            <Panels>
              <StatusCard />
              <ToolsCard />
              <ChartCard />
            </Panels>
            <FilesCard />
          </Main>
        </Body>
        <DialogShadow />
        <FileChooser />
      </Page>
    </>
  );
}
